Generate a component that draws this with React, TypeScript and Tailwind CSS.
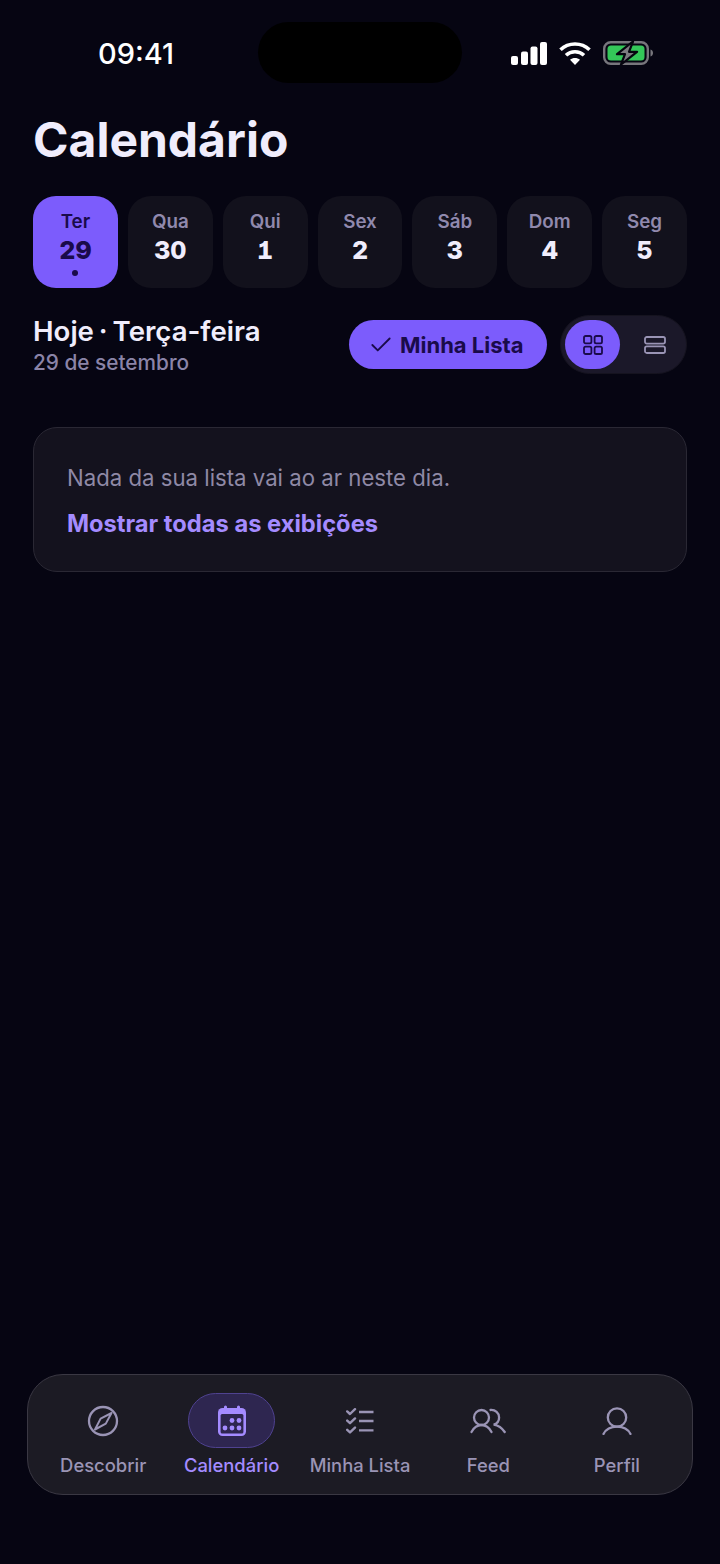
import React from 'react';
import { Check } from 'lucide-react';

const font = { fontFamily: 'Inter, "Liberation Sans", sans-serif' };

const days = [
  { label: 'Ter', num: '29', active: true },
  { label: 'Qua', num: '30' },
  { label: 'Qui', num: '1' },
  { label: 'Sex', num: '2' },
  { label: 'Sáb', num: '3' },
  { label: 'Dom', num: '4' },
  { label: 'Seg', num: '5' },
];

function StatusBar() {
  return (
    <div className="relative flex h-[87px] shrink-0 items-center justify-between pl-[98px] pr-[67px] pt-[19px]">
      <span className="text-[29px] font-medium leading-none text-white">09:41</span>
      <div className="absolute left-[258px] top-[22px] h-[61px] w-[204px] rounded-full bg-black" />
      <div className="flex items-center gap-[12px]">
        <svg width="36" height="23" viewBox="0 0 36 23" fill="#fff">
          <rect x="0" y="14" width="7" height="9" rx="2" />
          <rect x="10" y="9.5" width="7" height="13.5" rx="2" />
          <rect x="19.5" y="4.5" width="7" height="18.5" rx="2" />
          <rect x="29" y="0" width="7" height="23" rx="2" />
        </svg>
        <svg width="32" height="23" viewBox="0 0 32 23" fill="none" stroke="#fff" strokeWidth="3.6">
          <path d="M1.5 7.8C9.5 0 22.5 0 30.5 7.8" />
          <path d="M7 13.2C12 8.5 20 8.5 25 13.2" />
          <path d="M16 23l-5-5.2c2.8-2.4 7.2-2.4 10 0z" fill="#fff" stroke="none" />
        </svg>
        <svg width="50" height="24" viewBox="0 0 50 24" fill="none">
          <rect x="1.2" y="1.2" width="43.6" height="21.6" rx="6.5" stroke="#77767c" strokeWidth="2.4" />
          <rect x="4.5" y="4.5" width="37" height="15" rx="3.5" fill="#34c759" />
          <path d="M47.5 8.5c1.6.4 2.5 1.8 2.5 3.5s-.9 3.1-2.5 3.5z" fill="#77767c" />
          <path d="M30 0.5L14 13.2H22L18 23.5L34 10.8H26z" fill="#7c7b80" stroke="#06050f" strokeWidth="2.2" strokeLinejoin="round" />
        </svg>
      </div>
    </div>
  );
}

function DayStrip() {
  return (
    <div className="mt-[27px] flex gap-[10px]">
      {days.map((d) => (
        <div
          key={d.label}
          className={`flex h-[92px] flex-1 flex-col items-center rounded-[23px] pt-[14px] ${d.active ? 'bg-[#7c5cfc]' : 'bg-[#12111c]'}`}
        >
          <span className={`text-[18.8px] font-semibold leading-[24px] ${d.active ? 'text-[#1a0b4a]' : 'text-[#9089ad]'}`}>{d.label}</span>
          <span className={`mt-[1px] text-[25px] font-extrabold leading-[30px] [font-feature-settings:'tnum','cv01'] ${d.active ? 'text-[#1a0b4a]' : 'text-[#f0edfc]'}`}>{d.num}</span>
          {d.active && <span className="mt-[5px] h-[6px] w-[6px] rounded-full bg-[#1a0b4a]" />}
        </div>
      ))}
    </div>
  );
}

function GridIcon() {
  return (
    <svg width="20" height="20" viewBox="0 0 20 20" fill="none" stroke="#1a0b4a" strokeWidth="1.8">
      <rect x="1" y="1" width="7.4" height="7.4" rx="1.6" />
      <rect x="11.6" y="1" width="7.4" height="7.4" rx="1.6" />
      <rect x="1" y="11.6" width="7.4" height="7.4" rx="1.6" />
      <rect x="11.6" y="11.6" width="7.4" height="7.4" rx="1.6" />
    </svg>
  );
}

function RowsIcon() {
  return (
    <svg width="22" height="18" viewBox="0 0 22 18" fill="none" stroke="#9a94b5" strokeWidth="1.8">
      <rect x="1" y="1" width="20" height="6.6" rx="1.8" />
      <rect x="1" y="10.4" width="20" height="6.6" rx="1.8" />
    </svg>
  );
}

function TodayRow() {
  return (
    <div className="mt-[27px] flex items-start justify-between">
      <div>
        <div className="text-[27.6px] font-semibold leading-[32px] text-[#f0edfc] [word-spacing:-2px]">Hoje · Terça-feira</div>
        <div className="text-[20.8px] font-medium leading-[31px] text-[#8b84a8]">29 de setembro</div>
      </div>
      <div className="flex items-center gap-[13px]">
        <div className="flex h-[49px] w-[198px] items-center gap-[6px] rounded-full bg-[#7c5cfc] pl-[19px]">
          <Check size={26} strokeWidth={1.7} className="text-[#1a0b4a]" />
          <span className="pt-[1px] text-[22px] font-bold text-[#1a0b4a]">Minha Lista</span>
        </div>
        <div className="flex h-[59px] w-[127px] items-center rounded-full border border-[#15131f] bg-[#1b1829] pl-[4px]">
          <div className="flex h-[49px] w-[55px] items-center justify-center rounded-full bg-[#7c5cfc]">
            <GridIcon />
          </div>
          <div className="flex flex-1 items-center justify-center pl-[4px]">
            <RowsIcon />
          </div>
        </div>
      </div>
    </div>
  );
}

function EmptyCard() {
  return (
    <div className="mt-[49px] flex h-[145px] flex-col rounded-[24px] border border-[#2a2834] bg-[#14121e] px-[33px] pt-[35px]">
      <p className="text-[22.2px] leading-[30px] text-[#8f89a6]">Nada da sua lista vai ao ar neste dia.</p>
      <p className="mt-[16px] text-[23.7px] font-bold leading-[30px] text-[#a48bff]">Mostrar todas as exibições</p>
    </div>
  );
}

const navGrey = '#9a94b5';

function CompassIcon() {
  return (
    <svg width="32" height="32" viewBox="0 0 32 32" fill="none" stroke={navGrey} strokeWidth="2.3">
      <circle cx="16" cy="16" r="14" />
      <path d="M24.5 8L18.8 18.6L8 24.5L13.6 13.6z" strokeWidth="2" strokeLinejoin="round" />
    </svg>
  );
}

function CalendarIcon() {
  return (
    <svg width="30" height="32" viewBox="0 0 30 32" fill="none">
      <rect x="1" y="3" width="28" height="28" rx="4.5" fill="#a48bff" />
      <rect x="7" y="0.5" width="3" height="6" rx="1.5" fill="#a48bff" />
      <rect x="20" y="0.5" width="3" height="6" rx="1.5" fill="#a48bff" />
      <rect x="3.6" y="9" width="22.8" height="19.4" rx="1.5" fill="#2e2650" />
      <circle cx="15" cy="15.5" r="2.4" fill="#a48bff" />
      <circle cx="22" cy="15.5" r="2.4" fill="#a48bff" />
      <circle cx="8" cy="23" r="2.4" fill="#a48bff" />
      <circle cx="15" cy="23" r="2.4" fill="#a48bff" />
      <circle cx="22" cy="23" r="2.4" fill="#a48bff" />
    </svg>
  );
}

function ChecklistIcon() {
  return (
    <svg width="28" height="26" viewBox="0 0 28 26" fill="none" stroke={navGrey} strokeWidth="2.4" strokeLinecap="round" strokeLinejoin="round">
      <path d="M1.2 3.4l2.8 2.6L9 1.2" />
      <path d="M1.2 12.6l2.8 2.6L9 10.4" />
      <path d="M1.2 21.8l2.8 2.6L9 19.6" />
      <path d="M13 4h14.5M13 13h14.5M13 22.4h14.5" strokeLinecap="butt" />
    </svg>
  );
}

function FeedIcon() {
  return (
    <svg width="36" height="26" viewBox="0 0 36 26" fill="none" stroke={navGrey} strokeWidth="2.3" strokeLinecap="round">
      <circle cx="11.5" cy="9.5" r="7.5" />
      <path d="M1.5 24C4 19.4 7.2 17 11.5 17s7.5 2.4 10 7" />
      <path d="M20.5 2c4.8-.4 8.6 3 8.6 7.4 0 3.6-2.2 6.2-5.4 7.2 4.6.8 8.2 3.2 11 7.4" />
    </svg>
  );
}

function PersonIcon() {
  return (
    <svg width="30" height="28" viewBox="0 0 30 28" fill="none" stroke={navGrey} strokeWidth="2.3" strokeLinecap="round">
      <circle cx="15" cy="10.5" r="9.2" />
      <path d="M1.5 27c2.6-5 7.4-7.3 13.5-7.3s10.9 2.3 13.5 7.3" />
    </svg>
  );
}

const tabs = [
  { label: 'Descobrir', icon: <CompassIcon /> },
  { label: 'Calendário', icon: <CalendarIcon />, active: true },
  { label: 'Minha Lista', icon: <ChecklistIcon /> },
  { label: 'Feed', icon: <FeedIcon /> },
  { label: 'Perfil', icon: <PersonIcon /> },
];

function TabBar() {
  return (
    <div className="mx-[27px] mb-[69px] flex h-[121px] shrink-0 rounded-[36px] border border-[#3a3843] bg-[#1c1b24] px-[11px] pt-[18px]">
      {tabs.map((t) => (
        <div key={t.label} className="flex flex-1 flex-col items-center">
          <div className={`flex h-[55px] w-[87px] items-center justify-center rounded-full ${t.active ? 'border border-[#4f4290] bg-[#2e2650]' : ''}`}>
            {t.icon}
          </div>
          <span className={`mt-[4px] whitespace-nowrap text-[18.4px] font-medium leading-[26px] ${t.active ? 'text-[#a48bff]' : 'text-[#9a94b5]'}`}>{t.label}</span>
        </div>
      ))}
    </div>
  );
}

export default function App() {
  return (
    <div className="flex h-[1564px] w-[720px] flex-col overflow-hidden bg-[#060512]" style={font}>
      <StatusBar />
      <div className="flex-1 px-[33px]">
        <h1 className="mt-[24px] text-[48px] font-bold leading-[58px] text-[#f0edfc]">Calendário</h1>
        <DayStrip />
        <TodayRow />
        <EmptyCard />
      </div>
      <TabBar />
    </div>
  );
}
